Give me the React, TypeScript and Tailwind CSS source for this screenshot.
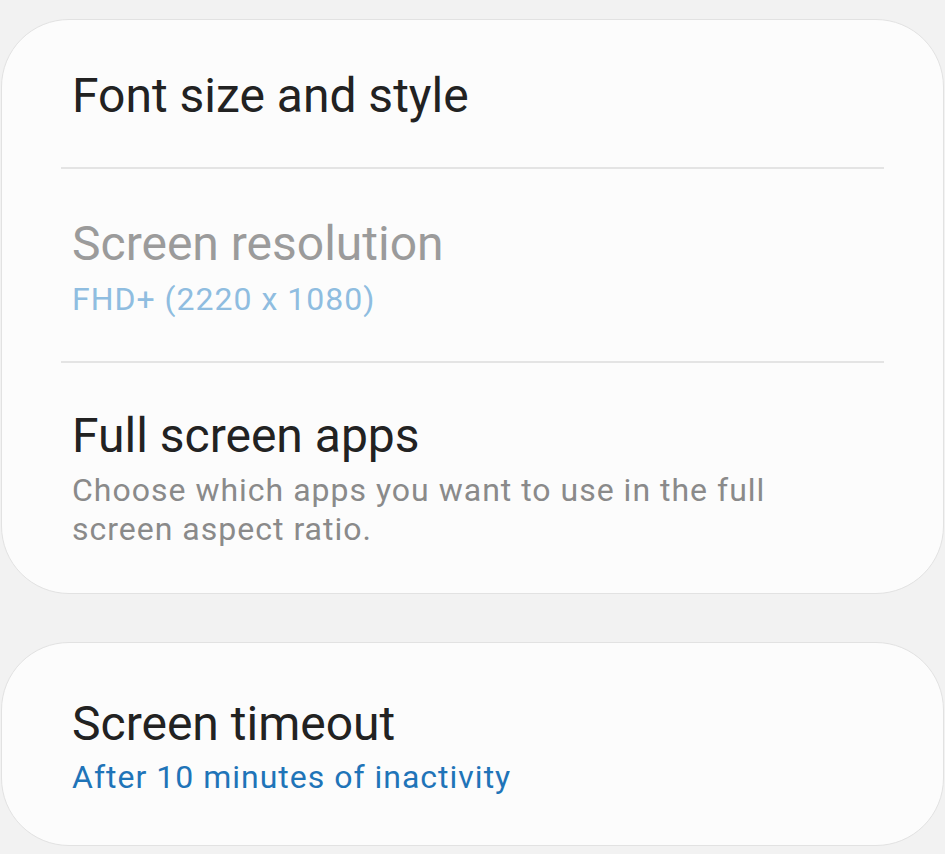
import React from "react";

export default function App() {
  return (
    <div
      className="w-[945px] h-[854px] bg-[#f2f2f2] overflow-hidden pt-[19px]"
      style={{ fontFamily: "Roboto, 'Noto Sans', sans-serif" }}
    >
      <div className="mx-px rounded-[68px] border border-[#e2e2e2] bg-[#fcfcfc]">
        <div className="pl-[70px] pr-[60px] pt-[48px] pb-[43px]">
          <div className="text-[48px] leading-[56px] text-[#222222]">Font size and style</div>
        </div>
        <div className="mx-[59px] h-[2px] bg-[#e4e4e4]" />
        <div className="pl-[70px] pr-[60px] pt-[47px] pb-[42px]">
          <div className="text-[48px] leading-[56px] text-[#9b9b9b]">Screen resolution</div>
          <div className="mt-[7px] text-[32px] leading-[40px] tracking-[1px] text-[#8fbde0]">FHD+ (2220 x 1080)</div>
        </div>
        <div className="mx-[59px] h-[2px] bg-[#e4e4e4]" />
        <div className="pl-[70px] pr-[60px] pt-[45px] pb-[44px]">
          <div className="text-[48px] leading-[56px] text-[#222222]">Full screen apps</div>
          <div className="mt-[7px] text-[32px] leading-[39px] tracking-[1px] text-[#8a8a8a] w-[720px]">
            Choose which apps you want to use in the full screen aspect ratio.
          </div>
        </div>
      </div>
      <div className="mx-px mt-[48px] rounded-[68px] border border-[#e2e2e2] bg-[#fcfcfc]">
        <div className="pl-[70px] pr-[60px] pt-[53px] pb-[48px]">
          <div className="text-[48px] leading-[56px] text-[#222222]">Screen timeout</div>
          <div className="mt-[5px] text-[32px] leading-[40px] tracking-[1px] text-[#1f74b8]">After 10 minutes of inactivity</div>
        </div>
      </div>
    </div>
  );
}
